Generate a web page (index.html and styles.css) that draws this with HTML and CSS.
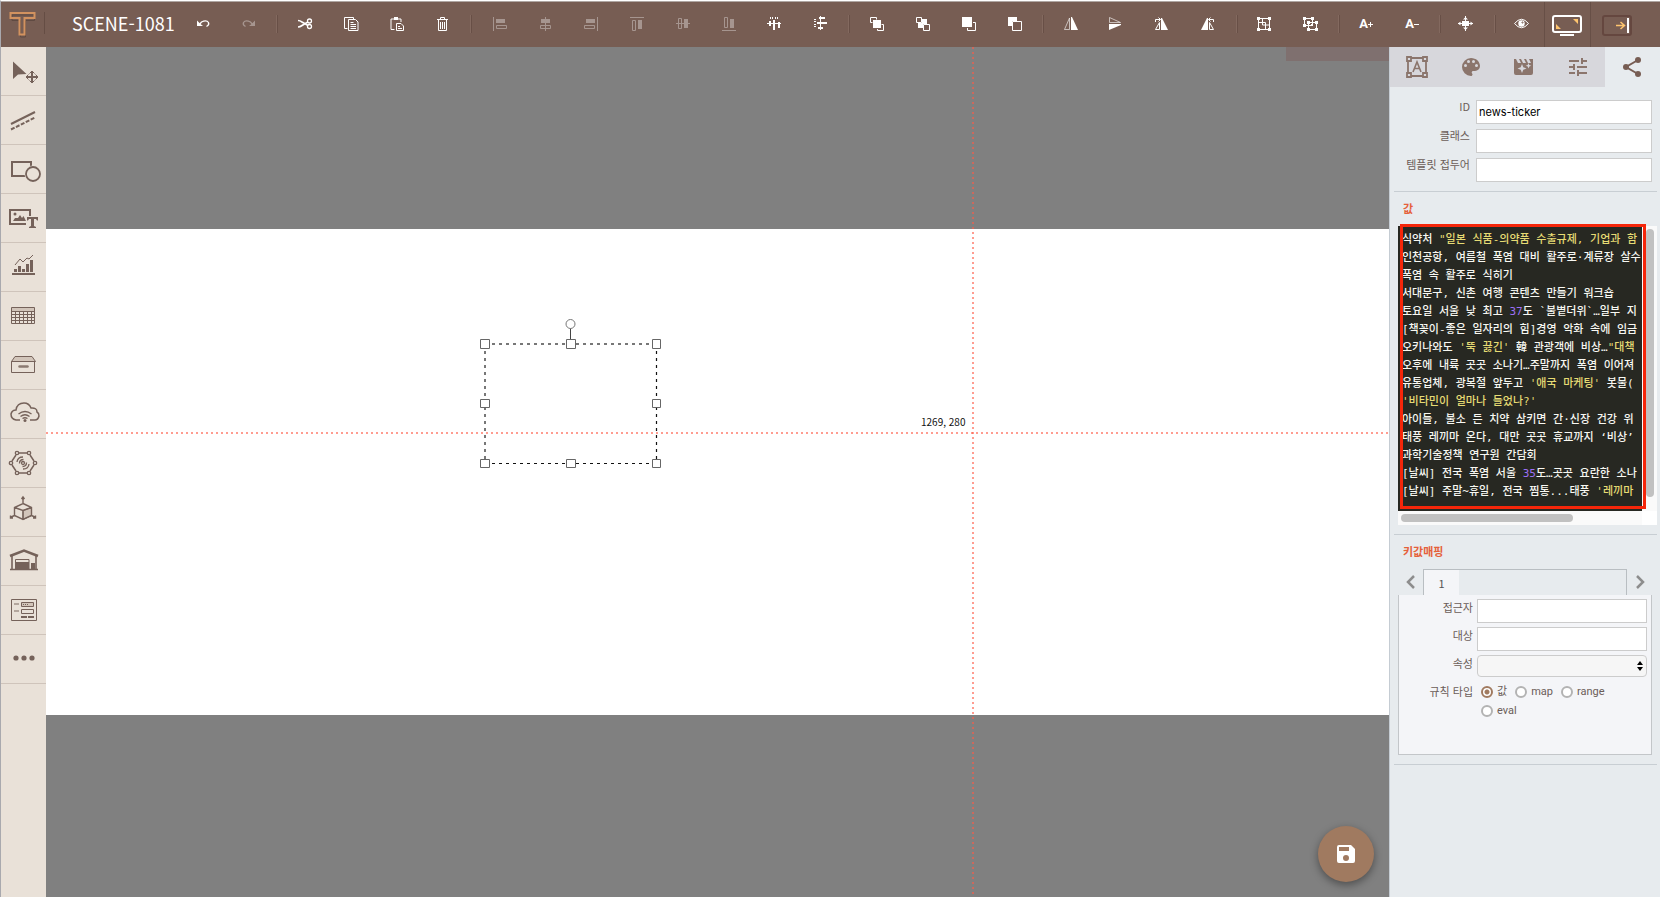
FILE: index.html
```html
<!DOCTYPE html>
<html lang="ko">
<head>
<meta charset="utf-8">
<title>SCENE-1081</title>
<link rel="stylesheet" href="styles.css">
</head>
<body>
<div class="app">
<header class="topbar">
  <a class="logo" href="#" aria-label="Home"><svg width="45" height="45" viewBox="0 0 45 45"><path d="M10 12h22.500v5.500h-9v16.500h-5v-16.500h-8.500z" transform="translate(1 1)" stroke="#5f4a42"/><path d="M9.500 11h24v5h-10v16.500h-5v-16.500h-9z" stroke="#d2925f" stroke-width="2"/></svg></a>
  <span class="logo-rule"></span>
  <h1 class="title">SCENE-1081</h1>
  <nav class="tools">
    <button aria-label="Undo"><svg viewBox="0 0 24 24"><path d="M8 13l2.500-3q5-2.500 7 .5 1 2.500-2 4" stroke-width="1.300"/><path class="f" d="M6 8.500v5.500h6l-2.500-2z"/></svg></button>
    <button class="dim" aria-label="Redo"><svg viewBox="0 0 24 24"><path d="M16 13l-2.500-3q-5-2.500-7 .5-1 2.500 2 4" stroke-width="1.300"/><path class="f" d="M18 8.500v5.500h-6l2.500-2z"/></svg></button>
    <i class="sep"></i>
    <button aria-label="Cut"><svg viewBox="0 0 24 24"><path d="M5 8.500q2 0 4 1.500l6 3.500M5 15q2 0 4-1.500l6-3.500" stroke-width="1.600"/><circle cx="16.500" cy="9" r="2" stroke-width="1.300"/><circle cx="16.500" cy="14.500" r="2" stroke-width="1.300"/></svg></button>
    <button aria-label="Copy"><svg viewBox="0 0 24 24"><path d="M14.500 7.500v-2h-9v11h3M9.500 7.500h7l2.500 2.500v8.500h-9.500zM11.500 10.500h3M11.500 12.500h5.500M11.500 14.500h5.500M11.500 16.500h5.500"/></svg></button>
    <button aria-label="Paste"><svg viewBox="0 0 24 24"><path d="M9.500 17.500h-3.500v-10.500h10v3M11.500 11.500h4.500l2.500 2.500v4.500h-7zM13 14.500h2M13 16.500h4"/><path class="f" d="M9 5h4v3h-4z"/></svg></button>
    <button aria-label="Delete"><svg viewBox="0 0 24 24"><path d="M6 7.500h11M9.500 7v-1.500h4v1.500M7.500 8v10.500h8v-10.500M9.500 10v7M11.500 10v7M13.500 10v7"/></svg></button>
    <i class="sep"></i>
    <button class="dim" aria-label="Align left"><svg viewBox="0 0 24 24"><path d="M6.500 5v14M9.500 13.500h10v3h-10z"/><path class="f" d="M9 7h9v4h-9z"/></svg></button>
    <button class="dim" aria-label="Align center"><svg viewBox="0 0 24 24"><path d="M12.500 5v14M7.500 13.500h10v3h-10z"/><path class="f" d="M8 7h9v4h-9z"/></svg></button>
    <button class="dim" aria-label="Align right"><svg viewBox="0 0 24 24"><path d="M18.500 5v14M5.500 13.500h10v3h-10z"/><path class="f" d="M7 7h9v4h-9z"/></svg></button>
    <button class="dim" aria-label="Align top"><svg viewBox="0 0 24 24"><path d="M5 5.500h14M7.500 8.500h3v10h-3z"/><path class="f" d="M13 8h4v9h-4z"/></svg></button>
    <button class="dim" aria-label="Align middle"><svg viewBox="0 0 24 24"><path d="M5 11.500h14M7.500 6.500h3v10h-3z"/><path class="f" d="M13 7h4v9h-4z"/></svg></button>
    <button class="dim" aria-label="Align bottom"><svg viewBox="0 0 24 24"><path d="M5 18.500h14M7.500 5.500h3v10h-3z"/><path class="f" d="M13 7h4v9h-4z"/></svg></button>
    <button aria-label="Distribute horizontally"><svg viewBox="0 0 24 24"><path d="M4 11.500h14M7.500 5v2M9.500 5v2M12.500 5v2M14.500 5v2"/><path class="f" d="M6 9h2v5h-2zM10 8h2v10h-2zM15 10h2v6h-2z"/></svg></button>
    <button aria-label="Distribute vertically"><svg viewBox="0 0 24 24"><path d="M11.500 4v14M5 7.500h2M5 9.500h2M5 12.500h2M5 14.500h2"/><path class="f" d="M10 5h6v2h-6zM8 10h10v2h-10zM9 15h5v2h-5z"/></svg></button>
    <i class="sep"></i>
    <button aria-label="Bring forward"><svg viewBox="0 0 24 24"><path d="M11.500 7.500v-2h-6v5h2M12.500 17v1.500h6v-6h-2"/><path class="f" d="M8 8h8v8h-8z"/></svg></button>
    <button aria-label="Send backward"><svg viewBox="0 0 24 24"><path d="M5.500 5.500h5v5h-5zM12.500 12.500h6v6h-6z"/><path class="f" d="M11 7h5v5h-4v4h-5v-5h4z"/></svg></button>
    <button aria-label="Bring to front"><svg viewBox="0 0 24 24"><path d="M16 10.500h2.500v8h-8v-2.500"/><path class="f" d="M5 5h10v10h-10z"/></svg></button>
    <button aria-label="Send to back"><svg viewBox="0 0 24 24"><path d="M9.500 9.500h9v9h-9z"/><path class="f" d="M5 5h9v4h-5v5h-4z"/></svg></button>
    <i class="sep"></i>
    <button aria-label="Flip horizontally"><svg viewBox="0 0 24 24"><path d="M10.500 6v11.500h-5z" opacity=".6"/><path class="f" d="M12 5h1l6 13h-7z"/></svg></button>
    <button aria-label="Flip vertically"><svg viewBox="0 0 24 24"><path d="M4.500 5.500v5h11z" opacity=".6"/><path class="f" d="M4 12h12v1l-12 5z"/></svg></button>
    <button aria-label="Rotate right"><svg viewBox="0 0 24 24"><path d="M8.500 10.500v7h-4zM4.500 10v-2.500h5M7.500 5.500l2 2-2 2"/><path class="f" d="M10 6h1l6 12h-7z"/></svg></button>
    <button aria-label="Rotate left"><svg viewBox="0 0 24 24"><path d="M12.500 10.500v7h4zM16.500 10v-2.500h-5M13.500 5.500l-2 2 2 2"/><path class="f" d="M11 6h-1l-6 12h7z"/></svg></button>
    <i class="sep"></i>
    <button aria-label="Group"><svg viewBox="0 0 24 24"><path d="M5.500 6.500h11v11h-11zM9.500 6.500v6.500h7M12.500 17.500v-7h-7" /><path class="f" d="M4 5h3v3h-3zM15 5h3v3h-3zM4 16h3v3h-3zM15 16h3v3h-3z"/></svg></button>
    <button aria-label="Ungroup"><svg viewBox="0 0 24 24"><path d="M5.500 6.500h8v7h-8zM9.500 10.500h8v7h-8z"/><path class="f" d="M4 5h3v3h-3zM12 5h3v3h-3zM4 12h3v3h-3zM12 12h2v2h-2zM8 9h3v3h-3zM16 9h3v3h-3zM8 16h3v3h-3zM16 16h3v3h-3z"/></svg></button>
    <i class="sep tight"></i>
    <button aria-label="Larger text"><span class="glyph">A</span><svg class="sign" viewBox="0 0 5 5"><path d="M0 2.500h5M2.500 0v5"/></svg></button>
    <button aria-label="Smaller text"><span class="glyph">A</span><svg class="sign" viewBox="0 0 5 5"><path d="M0 2.500h5"/></svg></button>
    <i class="sep tight"></i>
    <button aria-label="Center in scene"><svg viewBox="0 0 24 24"><path d="M3 11.500h15M10.500 4v15"/><path class="f" d="M7 9h7v5h-7zM8 7.500h5l-2.500-2.500zM8 15.500h5l-2.500 2.500zM5.500 9.500v4l-2.500-2zM15.500 9.500v4l2.500-2z"/></svg></button>
    <i class="sep tight"></i>
    <button aria-label="Preview"><svg viewBox="0 0 24 24"><path d="M4.500 11.500q7-8.500 14 0-7 8.500-14 0z"/><circle class="f" cx="11.500" cy="11.500" r="3.200"/><circle cx="12.500" cy="10.500" r=".6" stroke="#775d53"/></svg></button>
  </nav>
  <button class="screen" aria-label="Full screen"><svg width="32" height="24" viewBox="0 0 32 24"><rect x="2" y="3" width="28" height="16" rx="2" stroke-width="2"/><path d="M9 22h14" stroke-width="2"/><path d="M5 11l5 5h-5zM22 6h5v5z" fill="#ffc56e" stroke="none"/></svg></button>
  <button class="collapse" aria-label="Toggle panel"><svg width="32" height="24" viewBox="0 0 32 24"><rect x="2" y="3" width="28" height="19" rx="2" stroke="#65473f" stroke-width="2"/><path d="M15 12.500h8M19.500 9l4 3.500-4 3.500" stroke="#ffc56e" stroke-width="1.500"/><path d="M27 5v15" stroke-width="2"/></svg></button>
</header>
<main class="workspace">
  <nav class="palette">
    <button aria-label="Select and move"><svg viewBox="0 0 45 48"><path class="f" d="M12 14.500v17.500l5-4.500 8.500-.5z"/><path d="M26 30h10M31 25v10" stroke-width="2"/><path d="M27.500 27.500l-2.500 2.500 2.500 2.500M34.500 27.500l2.500 2.500-2.500 2.500M28.500 26.500l2.500-2.500 2.500 2.500M28.500 33.500l2.500 2.500 2.500-2.500"/></svg></button>
    <button aria-label="Lines"><svg viewBox="0 0 45 48"><path d="M10 28l24-12" stroke-width="2"/><path d="M10 33.500l24-12" stroke-width="2" stroke-dasharray="4 1.500"/></svg></button>
    <button aria-label="Shapes"><svg viewBox="0 0 45 48"><path d="M11 17h19v14h-19z" stroke-width="2"/><circle cx="32" cy="29" r="8.500" fill="#e9e1d8" stroke="none"/><circle cx="32" cy="29" r="7" stroke-width="1.800"/></svg></button>
    <button aria-label="Text and image"><svg viewBox="0 0 45 48"><path d="M25 30h-16v-14h20v6" stroke-width="2"/><circle class="f" cx="14" cy="20" r="1.500"/><path class="f" d="M12 27l2-3h3l2-3 2 3 1.500-2 2.500 5zM26 23h11v3.500h-1l-1-1.500h-2v7l2 1v1h-7v-1l2-1v-7h-2l-1 1.500h-1z"/></svg></button>
    <button aria-label="Charts"><svg viewBox="0 0 45 48"><path d="M14 22l5-6 3 3 4-4 2 1 4-4"/><path class="f" d="M11 30h23v2h-23zM13 26h3v3h-3zM17 23h3v6h-3zM21 26h3v3h-3zM25 21h3v8h-3zM29 17h3v12h-3z"/></svg></button>
    <button aria-label="Tables"><svg viewBox="0 0 45 48"><path d="M10 16h24v3.500h-24z" fill="#d2c5ba" stroke="none"/><path d="M10.500 15.500h23v16h-23zM10 19.500h24M10 22.500h24M10 25.500h24M10 28.500h24M14.500 19v12M18.500 19v12M22.500 19v12M26.500 19v12M30.500 19v12"/></svg></button>
    <button aria-label="Containers"><svg viewBox="0 0 45 48"><path d="M10.500 20.500l3.500-5h17l3.500 5z" fill="#d2c5ba"/><path d="M10.500 20.500h23v11h-23z"/><path d="M18.500 25.500h8" stroke-width="2.500" stroke-linecap="round" stroke="#8b7a71"/></svg></button>
    <button aria-label="Cloud data"><svg viewBox="0 0 45 48"><path d="M19 30h-4q-5-1-5-6 1-4 5-4 1-7 8-7 5 0 7 5 6-.5 6 4 2 1 2 4-1 4-4 4h-5" stroke-width="1.500"/><path d="M17.500 24q6.500-5 13 0M19.500 26.500q4.500-3.500 9 0M21.500 28.500q2.500-1.500 5 0" stroke-width="1.300"/><circle class="f" cx="24" cy="30.500" r="1.500"/></svg></button>
    <button aria-label="Sensors"><svg viewBox="0 0 45 48"><path d="M18 14h8M29 16l4 6M33 26l-4 6M26 34h-8M15 32l-4-6M11 22l4-6" stroke-width="1.500"/><g stroke-width="1.300"><circle cx="16" cy="14" r="1.700"/><circle cx="28" cy="14" r="1.700"/><circle cx="34" cy="24" r="1.700"/><circle cx="28" cy="34" r="1.700"/><circle cx="16" cy="34" r="1.700"/><circle cx="10" cy="24" r="1.700"/><circle cx="22" cy="24" r="1.500"/><path d="M18.500 24.500q0-4 4-4M16 23q.5-5 6-5M25.500 23.500q0 4-4 4M28 25q-.5 5-6 5"/></g></svg></button>
    <button aria-label="3D"><svg viewBox="0 0 45 48"><path d="M22 22.500l8.500-3v8l-8.500 4z" fill="#d2c5ba"/><path d="M22 15.500l8.500 4v8l-8.500 4-8.500-4v-8zM13.500 19.500l8.500 3 8.500-3M22 22.500v9M22 15.500v-6M20.500 11l1.500-2 1.500 2M13.500 27.500l-4.500 2M9.500 27.500v2.500h2.500M30.500 27.500l4.500 2M34.500 27.500v2.500h-2.500" stroke-width="1.400"/></svg></button>
    <button aria-label="Warehouse"><svg viewBox="0 0 45 48"><path d="M9 19l14-5.500 14 5.500" stroke-width="2.500"/><path d="M11 18v15M35 18v15M9 32.500h28" stroke-width="1.600"/><path d="M14.500 22.500h13.500v10h-13.500z"/><path class="f" d="M15 25h13v7h-13zM30 26h4v6h-4z"/></svg></button>
    <button aria-label="Forms"><svg viewBox="0 0 45 48"><path d="M10.500 13.500h25v21h-25z"/><path d="M20.500 16.500h12v4h-12z" fill="#d2c5ba"/><path d="M20.500 23.500h12v4h-12z"/><path d="M22 18.500h6" stroke-dasharray="1 1"/><path d="M13 18h5M13 25h5" stroke="#b3a69d" stroke-width="2"/><path d="M20 31h6M27 31h6" stroke-width="2"/></svg></button>
    <button aria-label="More"><svg viewBox="0 0 45 48"><circle class="f" cx="15" cy="23" r="2.600"/><circle class="f" cx="23" cy="23" r="2.600"/><circle class="f" cx="31" cy="23" r="2.600"/></svg></button>
  </nav>
  <section class="stage" aria-label="Scene">
    <div class="scene"></div>
    <span class="hint-tab"></span>
    <svg class="selection" width="184" height="160" viewBox="0 0 184 160">
      <path d="M7 34h171M7 34v120" stroke="#777" stroke-width="2" stroke-dasharray="3 4"/>
      <path d="M178.500 34v120M7 153.500h171" stroke="#111" stroke-dasharray="3 4" stroke-width="1.200"/>
      <path d="M92.500 18v12" stroke="#444"/><circle cx="92.500" cy="14" r="4.500" fill="#fff" stroke="#777"/>
      <g fill="#fff" stroke="#666"><path d="M2.500 29.500h9v9h-9zM88.500 29.500h9v9h-9zM174.500 29.500h8v9h-8zM2.500 89.500h9v8h-9zM174.500 89.500h8v8h-8zM2.500 149.500h9v8h-9zM88.500 149.500h9v8h-9zM174.500 149.500h8v8h-8z"/></g>
    </svg>
    <span class="guide-h"></span><span class="guide-v"></span>
    <span class="coords">1269, 280</span>
    <button class="save" aria-label="Save"><svg width="24" height="24" viewBox="0 0 24 24"><path fill="#fff" stroke="none" d="M17 3H5a2 2 0 0 0-2 2v14a2 2 0 0 0 2 2h14a2 2 0 0 0 2-2V7l-4-4zm-5 16a3 3 0 1 1 0-6 3 3 0 0 1 0 6zm3-10H5V5h10v4z"/></svg></button>
  </section>
  <aside class="panel">
    <div class="tabs">
      <button aria-label="Shape"><svg viewBox="0 0 24 24"><path d="M3 6v12M21 6v12M6 3h12M6 21h12M2 2h4v4H2zM18 2h4v4h-4zM2 18h4v4H2zM18 18h4v4h-4z" stroke-width="1.800"/><path d="M8 17l4-10 4 10M9.500 13.500h5" stroke-width="1.600"/></svg></button>
      <button aria-label="Style"><svg viewBox="0 0 24 24"><path class="f" d="M12 3a9 9 0 0 0 0 18c.8 0 1.500-.7 1.500-1.500 0-.4-.1-.7-.4-1-.2-.3-.4-.6-.4-1 0-.8.700-1.500 1.500-1.500H16a5 5 0 0 0 5-5c0-4.400-4-8-9-8zm-5.500 9a1.500 1.500 0 1 1 0-3 1.500 1.500 0 0 1 0 3zm3-4a1.500 1.500 0 1 1 0-3 1.500 1.500 0 0 1 0 3zm5 0a1.500 1.500 0 1 1 0-3 1.500 1.500 0 0 1 0 3zm3 4a1.500 1.500 0 1 1 0-3 1.500 1.500 0 0 1 0 3z"/></svg></button>
      <button aria-label="Effects"><svg viewBox="0 0 24 24"><path class="f" d="M2 4h2l2 4h3l-2-4h2l2 4h3l-2-4h2l2 4h3l-2-4h4v14a2 2 0 0 1-2 2H4a2 2 0 0 1-2-2z"/><path d="M10 9l1.300 3.200 3.200 1.300-3.200 1.300L10 18l-1.300-3.200-3.200-1.300 3.200-1.300zM16.500 8l.8 2 2 .8-2 .8-.8 2-.8-2-2-.8 2-.8z" fill="#d7d7dc" stroke="none"/></svg></button>
      <button aria-label="Properties"><svg viewBox="0 0 24 24"><path d="M3 6h10M17 6h4M3 12h4M11 12h10M3 18h6M13 18h8M16 3v6M8 9v6M12 15v6" stroke-width="2"/></svg></button>
      <button class="on" aria-label="Data binding"><svg viewBox="0 0 24 24"><path d="M18 5L6 12l12 7" stroke-width="2"/><circle class="f" cx="18" cy="5" r="3"/><circle class="f" cx="6" cy="12" r="3"/><circle class="f" cx="18" cy="19" r="3"/></svg></button>
    </div>
    <section class="group basics">
      <div class="field"><label for="f-id">ID</label><input id="f-id" value="news-ticker"></div>
      <div class="field"><label for="f-class">클래스</label><input id="f-class"></div>
      <div class="field"><label for="f-prefix">템플릿 접두어</label><input id="f-prefix"></div>
    </section>
    <section class="group value">
      <h2>값</h2>
      <div class="editor">
        <div class="code">
          <div class="line">식약처 <b>"일본 식품-의약품 수출규제, 기업과 함</b></div>
          <div class="line">인천공항, 여름철 폭염 대비 활주로·계류장 살수</div>
          <div class="line">폭염 속 활주로 식히기</div>
          <div class="line">서대문구, 신촌 여행 콘텐츠 만들기 워크숍</div>
          <div class="line">토요일 서울 낮 최고 <i>37</i>도 `불볕더위`…일부 지</div>
          <div class="line">[책꽂이-좋은 일자리의 힘]경영 악화 속에 임금</div>
          <div class="line">오키나와도 <b>'뚝 끓긴'</b> 韓 관광객에 비상…<b>"대책</b></div>
          <div class="line">오후에 내륙 곳곳 소나기…주말까지 폭염 이어져</div>
          <div class="line">유통업체, 광복절 앞두고 <b>'애국 마케팅'</b> 봇물(</div>
          <div class="line"><b>'비타민이 얼마나 들었나?'</b></div>
          <div class="line">아이들, 불소 든 치약 삼키면 간·신장 건강 위</div>
          <div class="line">태풍 레끼마 온다, 대만 곳곳 휴교까지 ‘비상’</div>
          <div class="line">과학기술정책 연구원 간담회</div>
          <div class="line">[날씨] 전국 폭염 서울 <i>35</i>도…곳곳 요란한 소나</div>
          <div class="line">[날씨] 주말~휴일, 전국 찜통...태풍 <b>'레끼마</b></div>
        </div>
        <div class="track-y"><span></span></div>
        <div class="track-x"><span></span></div>
        <div class="corner"></div>
        <span class="frame"></span>
      </div>
    </section>
    <section class="group mapping">
      <h2>키값매핑</h2>
      <div class="pager">
        <button aria-label="Previous"><svg width="10" height="14" viewBox="0 0 10 14"><path d="M8 1L2 7l6 6" stroke-width="2.500"/></svg></button>
        <div class="pages"><button class="page">1</button></div>
        <button aria-label="Next"><svg width="10" height="14" viewBox="0 0 10 14"><path d="M2 1l6 6-6 6" stroke-width="2.500"/></svg></button>
      </div>
      <div class="rule">
        <div class="field"><label for="f-acc">접근자</label><input id="f-acc"></div>
        <div class="field"><label for="f-target">대상</label><input id="f-target"></div>
        <div class="field"><label for="f-prop">속성</label><span class="select"><select id="f-prop"><option></option></select><svg width="6" height="10" viewBox="0 0 6 10"><path d="M0 4l3-4 3 4zM0 6l3 4 3-4z" fill="#000" stroke="none"/></svg></span></div>
        <div class="field"><span class="caption" id="rt">규칙 타입</span>
          <div class="radios" role="radiogroup" aria-labelledby="rt">
            <label><input type="radio" name="rule" checked>값</label>
            <label><input type="radio" name="rule">map</label>
            <label><input type="radio" name="rule">range</label>
            <label><input type="radio" name="rule">eval</label>
          </div>
        </div>
      </div>
    </section>
  </aside>
</main>
</div>
</body>
</html>
```
FILE: styles.css
```css
* { box-sizing: border-box; }
body { margin: 0; font: 11px/16px "Noto Sans CJK KR", sans-serif; color: #6b5d58; }
button { border: 0; padding: 0; background: none; color: inherit; font: inherit; }
svg { fill: none; stroke: currentColor; display: block; }
.f { fill: currentColor; stroke: none; }
.app { display: flex; flex-direction: column; height: 100vh; border-top: 1px solid #fff; border-left: 1px solid #a9a9ae; overflow: hidden; }

.topbar { display: flex; flex: none; align-items: flex-start; height: 46px; border-top: 1px solid #b0a7a3; background: #775d53; color: #fff; }
.logo { flex: none; width: 43px; overflow: hidden; }
.logo svg { width: 45px; }
.logo-rule { flex: none; width: 1px; height: 22px; margin-top: 10px; background: #654d44; }
.title { flex: none; width: 135px; margin: 0; padding-left: 27px; font: 400 18px/42px "Noto Sans CJK KR", sans-serif; white-space: nowrap; }
.tools { display: flex; flex: 1; min-width: 0; align-items: center; height: 44px; }
.tools button { display: flex; flex: none; align-items: center; justify-content: center; width: 46px; height: 44px; }
.tools svg { width: 24px; height: 24px; }
.tools .dim { opacity: .35; }
.tools .sep { flex: none; width: 10px; height: 18px; background: linear-gradient(90deg, #83695f 1px, #684f46 1px) 4px 0 / 2px 100% no-repeat; }
.tools .tight { width: 9px; }
.tools .glyph { font: 700 13px/16px Roboto, sans-serif; }
.tools .sign { width: 5px; height: 5px; }
.screen, .collapse { display: flex; align-items: center; flex: none; height: 45px; border-left: 1px solid #674f46; }
.screen { width: 46px; padding-left: 6px; }
.collapse { width: 70px; padding-left: 10px; }

.workspace { display: flex; flex: 1; min-height: 0; }
.palette { flex: none; width: 45px; background: #e9e1d8; color: #75625a; }
.palette button { display: block; width: 100%; border-bottom: 1px solid #cfc4bb; }
.palette svg { width: 45px; height: 48px; }

.stage { position: relative; flex: 1; min-width: 0; padding-top: 182px; background: #808080; overflow: hidden; }
.scene { height: 486px; background: #fff; }
.hint-tab { position: absolute; top: 0; right: 0; width: 103px; height: 14px; background: #7f706f; }
.selection { position: absolute; left: 432px; top: 263px; }
.guide-h { position: absolute; left: 0; right: 0; top: 385px; height: 2px; background: repeating-linear-gradient(90deg, #ff5a46 0 2px, transparent 2px 5px); opacity: .6; }
.guide-v { position: absolute; top: 0; bottom: 0; left: 926px; width: 2px; background: repeating-linear-gradient(#ff5a46 0 2px, transparent 2px 5px); opacity: .6; }
.coords { position: absolute; left: 875px; top: 367px; font: 10px/16px "Noto Sans CJK KR", sans-serif; color: #111; }
.save { position: absolute; right: 15px; bottom: 15px; display: flex; align-items: center; justify-content: center; width: 56px; height: 56px; border-radius: 50%; background: #a07a60; box-shadow: 0 3px 8px rgba(0, 0, 0, .4); }

.panel { flex: none; width: 271px; border-left: 1px solid #c5ccd3; background: #e7ebee; }
.tabs { display: flex; margin-right: 1px; background: #d7d7dc; height: 40px; color: #8b756c; }
.tabs button { display: flex; flex: 1; align-items: center; justify-content: center; }
.tabs svg { width: 24px; height: 24px; }
.tabs .on { background: #e7ebee; color: #775d53; }
.group { margin: 0 3px 0 4px; border-bottom: 1px solid #c8ced3; }
.basics { padding: 13px 5px 4px 4px; }
.field { display: flex; gap: 6px; margin-bottom: 5px; }
.field > label, .caption { flex: 1; text-align: right; }
.basics label { line-height: 13px; }
.field > input { width: 176px; height: 24px; border: 1px solid #ccc; padding: 2px; background: #fff; font: 11px/16px Inter, sans-serif; color: #000; }
h2 { margin: 0 0 0 5px; font: 700 11px/16px "Noto Sans CJK KR", sans-serif; color: #e5603a; }
.value { padding: 8px 0 9px 4px; }
.editor { position: relative; display: grid; grid-template-columns: 1fr 15px; grid-template-rows: 285px 14px; margin-top: 10px; }
.code { padding: 5px 0 0 4px; overflow: hidden; background: #272822; color: #f8f8f2; font: 500 11px/18px "DejaVu Sans Mono", "Noto Sans CJK KR", monospace; }
.line { height: 18px; white-space: pre; }
.code b { font-weight: 500; color: #e6db74; }
.code i { font-style: normal; color: #9d70f5; }
.track-y, .track-x { background: #fafafa; padding: 3px; }
.track-y { padding-left: 4px; }
.track-y span, .track-x span { display: block; background: #c1c1c1; border-radius: 4px; }
.track-y span { width: 8px; height: 268px; }
.track-x span { width: 172px; height: 8px; }
.corner { background: #fff; }
.frame { position: absolute; left: 2px; top: -2px; right: 11px; height: 285px; border: 3px solid #f5260a; }

.mapping { padding: 8px 5px 9px 4px; }
.pager { display: flex; margin-top: 10px; color: #8d8d8d; }
.pager > button { display: flex; align-items: center; justify-content: center; width: 25px; }
.pages { flex: 1; height: 26px; border: 1px solid #b9bec2; border-bottom: 0; }
.page { display: block; width: 35px; height: 25px; background: #f4f5f8; color: #555; }
.rule { height: 160px; padding: 4px 4px 0; border: 1px solid #c3c6c9; border-top: 0; background: #f4f5f8; }
.rule .field { gap: 4px; margin-bottom: 4px; }
.rule .field > input, .select, .radios { width: 170px; }
.select { position: relative; }
.select select { display: block; appearance: none; width: 100%; height: 22px; border: 1px solid #ccc; border-radius: 4px; background: #f6f6f6; }
.select svg { position: absolute; right: 4px; top: 6px; }
.caption { padding-top: 2px; }
.radios { display: flex; flex-wrap: wrap; gap: 3px 8px; padding: 3px 0 0 4px; font-family: Roboto, "Noto Sans CJK KR", sans-serif; }
.radios label { display: flex; align-items: center; gap: 4px; }
.radios input { appearance: none; width: 12px; height: 12px; margin: 0; border: 2px solid #b3b3b3; border-radius: 50%; background: #fff; }
.radios input:checked { border-color: #a07a60; background: radial-gradient(#a07a60 2px, #fff 3px); }
```
